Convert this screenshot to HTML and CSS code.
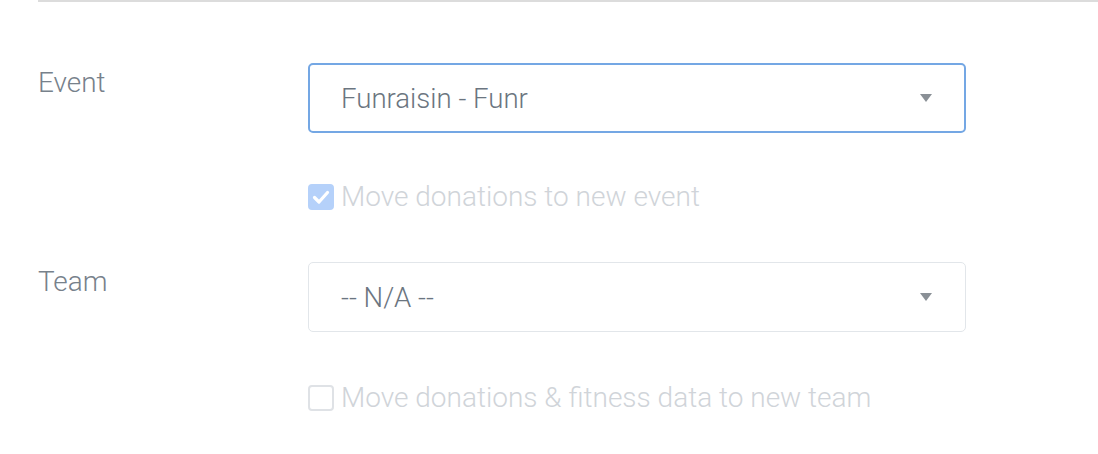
FILE: index.html
```html
<!DOCTYPE html>
<html>
<head>
<meta charset="utf-8">
<link rel="stylesheet" href="styles.css">
</head>
<body>
<div class="page">
  <div class="rule"></div>
  <div class="row row-first">
    <div class="label">Event</div>
    <div class="field">
      <div class="select focused">
        <span class="value">Funraisin - Funr</span>
        <span class="caret"></span>
      </div>
    </div>
  </div>
  <div class="row check-row">
    <div class="label"></div>
    <div class="field">
      <label class="check">
        <span class="box checked">
          <svg viewBox="0 0 26 26" width="26" height="26"><path d="M6.5 13.5 L11 18 L19.5 8.5" fill="none" stroke="#fff" stroke-width="3.2" stroke-linecap="round" stroke-linejoin="round"/></svg>
        </span>
        <span class="check-text">Move donations to new event</span>
      </label>
    </div>
  </div>
  <div class="row">
    <div class="label">Team</div>
    <div class="field">
      <div class="select">
        <span class="value">-- N/A --</span>
        <span class="caret"></span>
      </div>
    </div>
  </div>
  <div class="row check-row last">
    <div class="label"></div>
    <div class="field">
      <label class="check">
        <span class="box"></span>
        <span class="check-text">Move donations &amp; fitness data to new team</span>
      </label>
    </div>
  </div>
</div>
</body>
</html>
```
FILE: styles.css
```css
html, body {
  margin: 0;
  padding: 0;
  background: #fff;
}
body {
  font-family: Roboto, "Liberation Sans", sans-serif;
  font-weight: 300;
}
.page {
  padding-left: 38px;
}
.rule {
  height: 2px;
  background: #dcdcdc;
}
.row {
  display: flex;
  align-items: flex-start;
}
.row-first {
  margin-top: 61px;
}
.label {
  width: 270px;
  flex: none;
  font-size: 27.9px;
  color: #77818b;
  padding-top: 5px;
  line-height: 30px;
}
.field {
  width: 658px;
}
.select {
  box-sizing: border-box;
  height: 70px;
  border: 1px solid #e2e6ea;
  border-radius: 5px;
  display: flex;
  align-items: center;
  justify-content: space-between;
  padding: 0 33px 0 32px;
  font-size: 27.6px;
  color: #6b7580;
}
.select.focused {
  border: 2px solid #74a7e4;
  padding-left: 31px;
  padding-right: 32px;
}
.caret {
  width: 0;
  height: 0;
  border-left: 6px solid transparent;
  border-right: 6px solid transparent;
  border-top: 8px solid #8a9096;
}
.check-row {
  margin-top: 49px;
  margin-bottom: 50px;
}
.check-row.last {
  margin-top: 51px;
}
.check {
  display: flex;
  align-items: center;
  gap: 7px;
  font-size: 28px;
  color: #d0d4d9;
  line-height: 30px;
}
.box {
  box-sizing: border-box;
  width: 26px;
  height: 26px;
  border: 2px solid #dfe2e6;
  border-radius: 4px;
  flex: none;
  display: flex;
}
.box.checked {
  background: #b5d1fa;
  border-color: #b5d1fa;
}
.box.checked svg {
  margin: -2px;
}
```
